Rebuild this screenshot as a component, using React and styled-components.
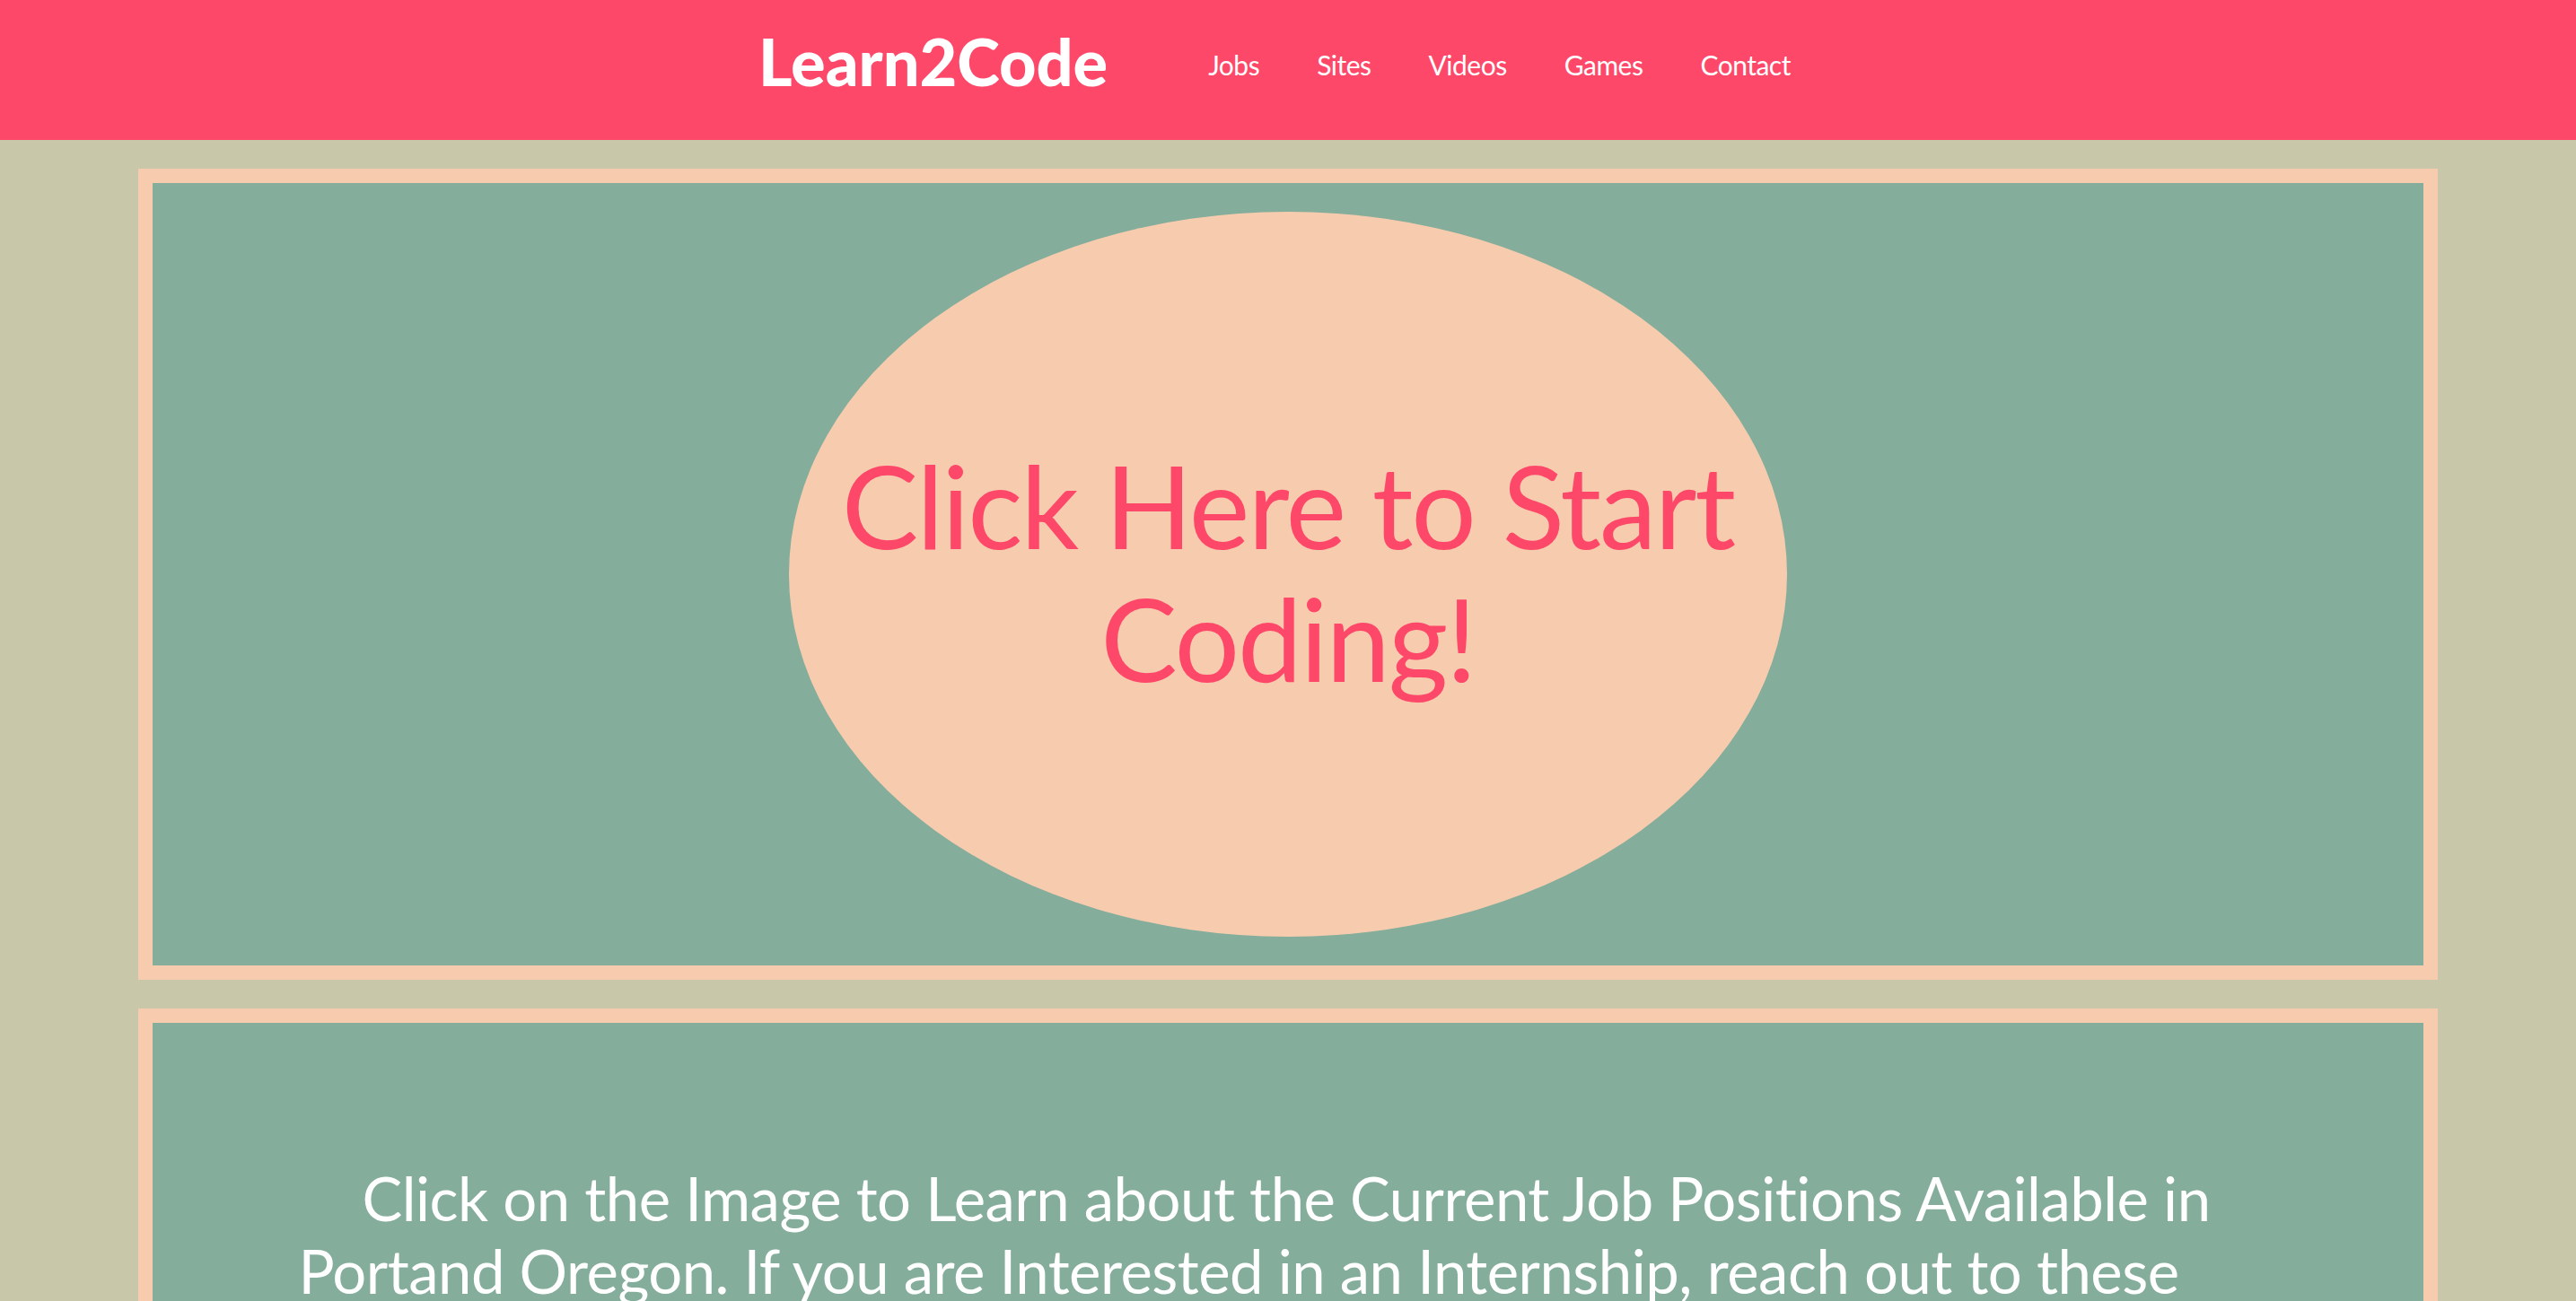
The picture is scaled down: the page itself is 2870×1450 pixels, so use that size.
import React from "react";
import styled, { createGlobalStyle } from "styled-components";

const PINK = "#fe4869";
const SAND = "#c8c7a9";
const PEACH = "#f7ccae";
const SAGE = "#85ad9b";

const GlobalStyle = createGlobalStyle`
  html, body {
    margin: 0;
    padding: 0;
    background: ${SAND};
    font-family: Lato, "Open Sans", sans-serif;
  }
`;

const Header = styled.header`
  height: 156px;
  background: ${PINK};
  display: flex;
  justify-content: center;
  align-items: center;
  gap: 112px;
  padding: 0 30px 20px 0;
  box-sizing: border-box;
`;

const Logo = styled.a`
  color: #fff;
  font-family: Lato, sans-serif;
  font-weight: 900;
  font-size: 72px;
  letter-spacing: 0;
  text-decoration: none;
`;

const Nav = styled.nav`
  display: flex;
  align-items: center;
  gap: 64px;
  padding-top: 8px;
`;

const NavLink = styled.a`
  color: #fff;
  font-family: Lato, sans-serif;
  font-size: 30px;
  letter-spacing: -0.5px;
  text-decoration: none;
`;

const Main = styled.main`
  display: flex;
  flex-direction: column;
  gap: 32px;
  padding: 32px 154px;
`;

const Panel = styled.section`
  border: 16px solid ${PEACH};
  background: ${SAGE};
  display: flex;
  flex-direction: column;
  align-items: center;
  padding: ${(p) => p.$pad};
`;

const Ellipse = styled.a`
  width: 1112px;
  height: 808px;
  border-radius: 50%;
  background: ${PEACH};
  display: flex;
  align-items: center;
  justify-content: center;
  text-decoration: none;
`;

const Cta = styled.span`
  color: ${PINK};
  font-family: Lato, sans-serif;
  font-size: 128px;
  line-height: 148px;
  letter-spacing: -2px;
  text-align: center;
  max-width: 1080px;
  padding-bottom: 6px;
`;

const Blurb = styled.p`
  margin: 0;
  color: #fff;
  font-family: Lato, sans-serif;
  font-size: 67px;
  line-height: 81px;
  letter-spacing: -0.5px;
  text-align: center;
  text-indent: 106px;
  width: 2220px;
  padding-right: 110px;
`;

export default function App() {
  return (
    <>
      <GlobalStyle />
      <Header>
        <Logo href="#">Learn2Code</Logo>
        <Nav>
          <NavLink href="#">Jobs</NavLink>
          <NavLink href="#">Sites</NavLink>
          <NavLink href="#">Videos</NavLink>
          <NavLink href="#">Games</NavLink>
          <NavLink href="#">Contact</NavLink>
        </Nav>
      </Header>
      <Main>
        <Panel $pad="32px">
          <Ellipse href="#">
            <Cta>Click Here to Start Coding!</Cta>
          </Ellipse>
        </Panel>
        <Panel $pad="155px 0 120px">
          <Blurb>
            Click on the Image to Learn about the Current Job Positions Available in
            Portand Oregon. If you are Interested in an Internship, reach out to these
            companies and ask about the opportunities they have for new developers.
          </Blurb>
        </Panel>
      </Main>
    </>
  );
}
